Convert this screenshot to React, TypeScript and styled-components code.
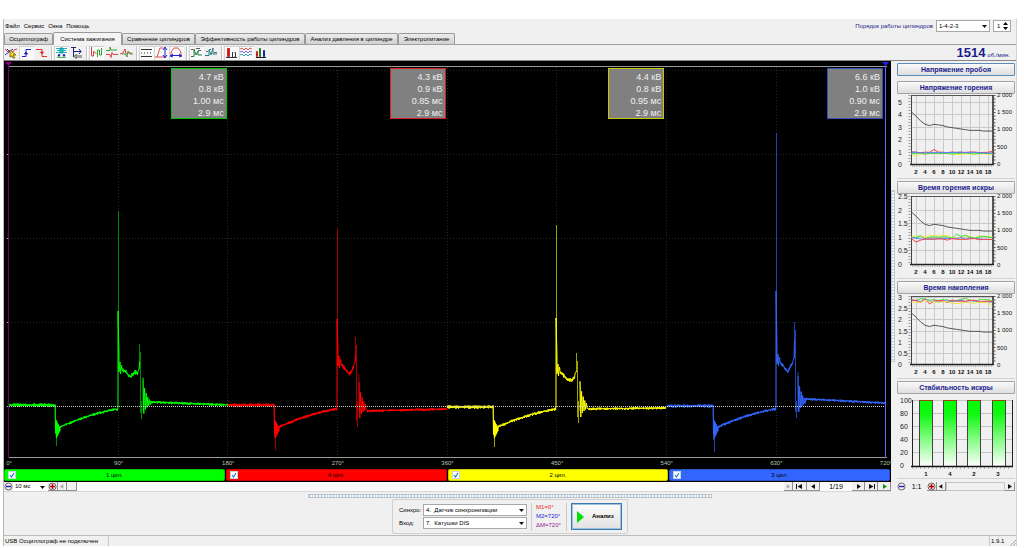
import React from "react";
import styled, { createGlobalStyle } from "styled-components";

const arial = `"Liberation Sans", Arial, sans-serif`;
const navy = "#1c1c8c";

const Global = createGlobalStyle`
  * { box-sizing: border-box; }
  body { margin: 0; background: #fff; font-family: ${arial}; font-size: 6px; line-height: 9px; color: #000; }
  button, input, select { font: inherit; color: inherit; margin: 0; padding: 0; border-radius: 0; }
  svg { display: block; }
`;

const Shell = styled.div`
  margin: 19px 7px 3px 3px;
  background: #f0f0f0;
  border-left: 1px solid #b8b8b8;
  border-right: 1px solid #d0d0d0;
`;

const MenuBar = styled.header`
  display: flex;
  align-items: center;
  justify-content: space-between;
  height: 14px;
  padding: 0 5px 0 1px;
`;
const Menu = styled.nav`
  display: flex;
  gap: 4px;
`;
const MenuItem = styled.button`
  border: 0;
  background: none;
`;
const OrderGroup = styled.div`
  display: flex;
  align-items: center;
  gap: 3px;
  color: ${navy};
`;

const SelectBox = styled.span<{ $w: number; $plain?: boolean }>`
  position: relative;
  display: block;
  width: ${(p) => p.$w}px;
  height: ${(p) => (p.$plain ? 9 : 12)}px;
  color: #000;
  svg {
    position: absolute;
    right: 3px;
    top: 50%;
    margin-top: -1px;
    pointer-events: none;
  }
  select {
    display: block;
    appearance: none;
    width: 100%;
    height: 100%;
    padding: 0 2px;
    background: #fff;
    border: ${(p) => (p.$plain ? "0" : "1px solid #a8a8a8")};
  }
`;
const Spinner = styled.span`
  display: flex;
  width: 18px;
  height: 12px;
  border: 1px solid #a8a8a8;
  background: #fff;
  color: #000;
  input {
    width: 9px;
    border: 0;
    padding-left: 3px;
    background: none;
  }
`;
const SpinButtons = styled.span`
  display: flex;
  flex-direction: column;
  justify-content: center;
  gap: 2px;
  button {
    display: block;
    border: 0;
    background: none;
  }
`;

const TabRow = styled.div`
  display: flex;
  align-items: flex-end;
  height: 12px;
  border-bottom: 1px solid #a0a0a0;
`;
const Tab = styled.button<{ $w: number; $active?: boolean }>`
  width: ${(p) => p.$w}px;
  height: ${(p) => (p.$active ? 13 : 11)}px;
  margin-bottom: ${(p) => (p.$active ? -1 : 0)}px;
  flex: none;
  display: flex;
  align-items: center;
  justify-content: center;
  white-space: nowrap;
  border: 1px solid #9a9a9a;
  border-bottom: 0;
  border-radius: 2px 2px 0 0;
  background: ${(p) => (p.$active ? "#f4f4f4" : "linear-gradient(#ececec, #d2d2d2)")};
`;

const ToolRow = styled.div`
  display: flex;
  align-items: center;
  height: 16px;
  padding-right: 6px;
  border-bottom: 1px solid #888;
`;
const ToolGroup = styled.div`
  display: flex;
  padding-right: 2px;
  margin-right: 2px;
  border-right: 1px solid #c4c4c4;
  box-shadow: 1px 0 #fff;
  &:nth-last-child(2) {
    border: 0;
    box-shadow: none;
  }
`;
const Tool = styled.button<{ $on?: boolean }>`
  width: 15px;
  height: 14px;
  border: 0;
  background: ${(p) => (p.$on ? "#fafafa" : "none")};
  box-shadow: ${(p) => (p.$on ? "inset 1px 1px #d4d4d4" : "none")};
`;
const Rpm = styled.div`
  display: flex;
  align-items: baseline;
  gap: 2px;
  margin-left: auto;
  color: ${navy};
  strong {
    font: bold 13px/14px ${arial};
  }
`;

const Main = styled.main`
  display: grid;
  grid-template-columns: minmax(0, 1fr) 125px;
`;
const Scope = styled.section`
  background: #000;
`;
const Screen = styled.div`
  position: relative;
`;
const Trace = styled.svg`
  width: 100%;
  height: 397px;
`;
const ReadoutLayer = styled.div`
  position: absolute;
  inset: 7px 8px auto 4px;
  display: grid;
  grid-template-columns: repeat(4, 1fr);
  justify-items: end;
`;
const Readout = styled.div<{ $c: string }>`
  width: 56px;
  height: 51px;
  padding: 2px 2px 0;
  border: 1px solid ${(p) => p.$c};
  background: #808080;
  color: #f0f0f0;
  font: 9px/12px ${arial};
  text-align: right;
`;
const Degrees = styled.div`
  display: flex;
  justify-content: space-between;
  height: 11px;
  padding: 0 5px 0 5px;
  color: #b4ccb0;
  line-height: 11px;
  span {
    display: flex;
    justify-content: center;
    width: 0;
  }
`;
const CylinderRow = styled.div`
  display: grid;
  grid-template-columns: repeat(4, 1fr);
  gap: 1px;
  height: 13px;
  padding: 0 1px 1px 0;
`;
const Cylinder = styled.label<{ $c: string }>`
  display: grid;
  grid-template-columns: 8px 1fr 8px;
  align-items: center;
  padding: 0 3px;
  border-radius: 2px;
  border: 1px solid rgba(0, 0, 0, 0.2);
  background: ${(p) => p.$c};
  text-align: center;
`;
const Tick = styled.span`
  position: relative;
  display: block;
  width: 8px;
  height: 8px;
  input {
    display: block;
    appearance: none;
    width: 8px;
    height: 8px;
    background: #fff;
    border: 1px solid #c8d4dc;
  }
  svg {
    position: absolute;
    inset: 0;
    pointer-events: none;
  }
`;
const ScopeBar = styled.div`
  display: flex;
  align-items: center;
  height: 10px;
  background: #fafafa;
  border-bottom: 1px solid #d8d8d8;
`;
const Spring = styled.span`
  flex: 1;
`;
const Small = styled.button<{ $w: number; $flat?: boolean }>`
  display: flex;
  align-items: center;
  justify-content: center;
  width: ${(p) => p.$w}px;
  height: 9px;
  border: 0 solid #909090;
  border-width: ${(p) => (p.$flat ? "0" : "0 1px 1px 0")};
  background: #f0f0f0;
`;
const Count = styled.output<{ $w: number }>`
  width: ${(p) => p.$w}px;
  font-size: 7px;
  text-align: center;
`;

const Side = styled.aside`
  display: grid;
  grid-template-columns: 4px minmax(0, 1fr);
  gap: 2px;
`;
const VSplit = styled.div`
  align-self: start;
  height: 172px;
  margin-top: 129px;
  border: 1px solid #c0c8d0;
  background: repeating-linear-gradient(#a8d0f4 0 1px, #f4f8fc 1px 3px);
`;
const SideStack = styled.div`
  display: flex;
  flex-direction: column;
  gap: 2px;
  padding: 2px 1px 0 0;
`;
const TitleButton = styled.button<{ $focus?: boolean }>`
  display: block;
  width: 100%;
  height: 13px;
  margin-bottom: ${(p) => (p.$focus ? 3 : 0)}px;
  border: 1px solid ${(p) => (p.$focus ? "#5a8cb8" : "#a4a4a4")};
  border-radius: 1px;
  background: linear-gradient(#fafafa, #dedede);
  color: ${navy};
  font: bold 7px/9px ${arial};
`;
const Card = styled.section`
  height: 98px;
  border-bottom: 1px solid #d4d4d4;
  svg {
    width: 100%;
    height: 84px;
    overflow: visible;
    font: 7px ${arial};
  }
`;
const SideBar = styled.div`
  display: flex;
  align-items: center;
  height: 11px;
`;
const Track = styled.span`
  flex: 1;
  height: 9px;
  border: 1px solid #c4c4c4;
`;

const HSplit = styled.div`
  width: 40%;
  height: 4px;
  margin: 2px auto 1px;
  border: 1px solid #c0c0c0;
  background: repeating-linear-gradient(90deg, #a8d0f4 0 1px, #f0f4f8 1px 3px);
`;
const ControlArea = styled.div`
  display: flex;
  justify-content: center;
  padding-bottom: 1px;
  border-bottom: 1px solid #bcbcbc;
`;
const Controls = styled.form`
  display: flex;
  align-items: center;
  gap: 4px;
  height: 35px;
  padding: 0 5px 0 6px;
  border: 1px solid #d0d0d0;
  border-radius: 2px;
`;
const Fields = styled.div`
  display: grid;
  grid-template-columns: 21px 104px;
  align-items: center;
  gap: 1px 3px;
`;
const Marks = styled.div`
  width: 36px;
  height: 28px;
  padding-left: 4px;
  border-left: 1px solid #ccc;
  border-right: 1px solid #ccc;
  line-height: 9px;
`;
const Mark = styled.div<{ $c: string }>`
  color: ${(p) => p.$c};
`;
const Analyse = styled.button`
  display: flex;
  align-items: center;
  gap: 8px;
  width: 51px;
  height: 27px;
  padding-left: 5px;
  border: 1px solid #3c78b0;
  box-shadow: inset 0 0 0 1px #9cc0e0;
  background: linear-gradient(#fcfcfc, #e2e2e2);
  font: bold 6px/9px ${arial};
`;
const Status = styled.footer`
  display: flex;
  height: 10px;
  line-height: 9px;
`;
const StatusCell = styled.span<{ $w?: number }>`
  width: ${(p) => (p.$w ? p.$w + "px" : "auto")};
  flex: ${(p) => (p.$w ? "none" : "1")};
  display: flex;
  justify-content: space-between;
  align-items: flex-end;
  padding-left: 1px;
  white-space: nowrap;
  border-right: 1px solid #c8c8c8;
  &:last-of-type {
    border: 0;
  }
`;

/* ---------- waveform ---------- */

type Wave = {
  x0: number; color: string; dim: string; base: number; dip: number; spike: number; body: number;
  burn: number[]; off: number; peak: number; under: number; tail: [number, number];
};

const waves: Wave[] = [
  { x0: 5, color: "#00ff00", dim: "#008a00", base: 344, dip: 385, spike: 150, body: 250, burn: [309, 311, 316, 311, 312], off: 131, peak: 283, under: 358, tail: [341, 344] },
  { x0: 224, color: "#ff0000", dim: "#a00000", base: 344, dip: 389, spike: 167, body: 258, burn: [303, 308, 313, 311, 305], off: 128, peak: 276, under: 366, tail: [350, 348] },
  { x0: 443, color: "#ffff00", dim: "#a0a000", base: 346, dip: 386, spike: 164, body: 257, burn: [311, 315, 319, 319, 315], off: 130, peak: 292, under: 362, tail: [348, 347] },
  { x0: 663, color: "#3366ff", dim: "#2244aa", base: 345, dip: 391, spike: 72, body: 230, burn: [301, 306, 311, 306, 301], off: 128, peak: 261, under: 357, tail: [338, 342] },
];

const noise = (n: number) => {
  const s = Math.sin(n * 12.9898) * 43758.5453;
  return s - Math.floor(s) - 0.5;
};

function band(x1: number, y1: number, x2: number, y2: number, amp: number, bend = 0) {
  const out: string[] = [];
  for (let x = x1; x <= x2; x += 0.5) {
    const t = (x - x1) / Math.max(1, x2 - x1);
    const y = y1 + (y2 - y1) * t - bend * 4 * t * (1 - t);
    const side = Math.round(x * 2) % 2 ? 1 : -1;
    out.push(`${x.toFixed(1)} ${(y + side * amp * (0.8 + noise(x))).toFixed(1)}`);
  }
  return out.join("L");
}

function bodyPath(w: Wave) {
  const a = w.x0;
  const sx = a + 109;
  const p = a + w.off;
  const b = w.burn;
  const charge = [0, 1, 2, 3, 4, 5].map((i) => {
    const k = 9 - i * 1.4;
    return `${a + 47 + i * 0.7} ${368 - k}L${a + 47.4 + i * 0.7} ${368 + k}`;
  });
  const mid = (w.tail[0] + 344) / 2;
  const ring = [20, 12, 8, 5, 3].map((k, i) => `${p + 3 + i * 1.6} ${mid - k * 1.3}L${p + 3.8 + i * 1.6} ${mid + k * 0.5}`);
  return [
    `M${band(a, w.base, a + 46, w.base, 1.3)}`,
    `L${a + 46.5} ${w.base + 28}L${charge.join("L")}`,
    `L${band(a + 51, 366, sx - 0.5, 348, 1.1, 2)}`,
    `L${sx} 346L${sx} ${w.body}L${sx + 1} ${b[0] - 16}L${sx + 1} ${b[0] + 2}L${sx + 2} ${b[0] - 8}L${sx + 2.5} ${b[0] + 4}L${sx + 3.5} ${b[0] - 5}`,
    `L${band(sx + 4, b[0], sx + 8, b[1], 1.6)}`,
    `L${band(sx + 8, b[1], sx + 12, b[2], 1.3)}`,
    `L${band(sx + 12, b[2], p - 5, b[3], 1.5)}`,
    `L${band(p - 5, b[3], p - 2, b[4], 1.8)}`,
    `L${p - 1} ${b[4] - 4}L${p - 0.5} ${w.peak + 18}`,
    `M${ring.join("L")}`,
    `L${band(p + 11, w.tail[0], a + 219, w.tail[1], 1)}`,
  ].join("");
}

function dimPath(w: Wave) {
  const a = w.x0;
  const p = a + w.off;
  return `M${a + 46.5} ${w.base}V${w.dip - 12}M${a + 47.5} 360V${w.dip}M${a + 109.5} ${w.spike}V${w.burn[0]}M${p - 0.5} ${w.burn[4] - 4}V${w.peak}M${p + 0.5} ${w.peak + 8}V${w.under - 6}M${p + 1.5} 340V${w.under}M${p + 3} ${w.burn[0] + 10}V350`;
}

const Waveform = () => (
  <Trace viewBox="0 0 887 397" preserveAspectRatio="none" fill="none" aria-label="Осциллограмма">
    <g stroke="#282828" strokeDasharray="1 2">
      {[9, 93, 177, 261].map((y) => <path key={y} d={`M5 ${y + 0.5}H882`} />)}
      {[114, 223, 333, 443, 552, 662, 772].map((x) => <path key={x} d={`M${x + 0.5} 6V396`} />)}
    </g>
    <path d="M4 5.5H883M4 396.5H883" stroke="#9a9a9a" />
    <path d="M3 93.5h2M3 177.5h2M3 261.5h2M3 345.5h2" stroke="#bbb" />
    {waves.map((w) => (
      <g key={w.color}>
        <path d={dimPath(w)} stroke={w.dim} />
        <path d={bodyPath(w)} stroke={w.color} strokeLinejoin="bevel" />
      </g>
    ))}
    <path d="M5 345.5H882" stroke="#d0d0d0" strokeDasharray="1 1" />
    <path d="M4.5 5V397" stroke="#700070" />
    <path d="M881.5 5V397" stroke="#6464ff" />
    <path d="M1 1h7L4.500 5Z" fill="#900090" />
    <path d="M878 1h7l-3.500 4Z" fill="#2020ff" />
  </Trace>
);

/* ---------- side charts ---------- */

type Line = { c: string; v: number[] };

const decay = [0, 6, 13, 18, 20, 18, 19, 20, 22, 23, 24, 25, 26, 27, 27, 27, 28, 28, 28];

function LineChart({ ticks, top, step, start, lines, yl }: { ticks: string[]; top: number; step: number; start: number; lines: Line[]; yl: number }) {
  const px = (i: number) => 14.5 + i * 4.5;
  const pts = (v: number[]) => v.map((y, i) => `${px(i)},${y}`).join(" ");
  return (
    <svg viewBox="0 0 118 84" fill="none">
      <g stroke="#cacaca">
        {ticks.map((t, i) => <path key={t} d={`M14 ${Math.round(top + i * step) + 0.5}H96`} />)}
        {[1, 3, 5, 7, 9, 11, 13, 15, 17].map((i) => <path key={i} d={`M${Math.round(px(i)) + 0.5} ${yl}V70`} />)}
      </g>
      <path d={`M14 ${yl + 0.5}H96`} stroke="#555" />
      <path d={`M14.5 ${yl}V70`} stroke="#444" />
      <path d={`M13 70.5H97M96 ${yl}V71`} stroke="#222" strokeWidth="1.500" />
      <path d={`M12.500 ${yl}V70`} stroke="#999" strokeDasharray="1 2" strokeWidth="2" />
      <path d={`M97.500 ${yl}V70`} stroke="#555" strokeDasharray="1 2.400" strokeWidth="2" />
      <path d="M15 72H96" stroke="#777" strokeDasharray="1 1.250" strokeWidth="1" />
      <polyline points={pts(decay.map((d) => d * 0.68 + start))} stroke="#555" />
      {lines.map((l) => <polyline key={l.c} points={pts(l.v)} stroke={l.c} />)}
      <g fill="#222">
        {ticks.map((t, i) => <text key={t} x="1" y={Math.round(top + i * step) + 3}>{t}</text>)}
      </g>
      <g fill="#111" fontSize="6">
        {["2 000", "1 500", "1 000", "500", "0"].map((t, i) => <text key={t} x={100} y={Math.round(yl + i * 17.2) + 2}>{t}</text>)}
      </g>
      <g fill="#111" fontWeight="bold" textAnchor="middle" fontSize="6">
        {[2, 4, 6, 8, 10, 12, 14, 16, 18].map((n) => <text key={n} x={Math.round(px(n - 1))} y="80">{n}</text>)}
      </g>
    </svg>
  );
}

const wobble = (base: number, amp: number, seed: number, patch: Record<number, number> = {}) =>
  decay.map((_, i) => (patch[i] !== undefined ? patch[i] : base + noise(i * 3.1 + seed) * amp));

function StabilityChart() {
  return (
    <svg viewBox="0 0 118 84" fill="none">
      <defs>
        <linearGradient id="fade" x1="0" y1="0" x2="0" y2="1">
          <stop offset="0" stopColor="#00ff00" />
          <stop offset="0.200" stopColor="#10f810" />
          <stop offset="1" stopColor="#fff" />
        </linearGradient>
      </defs>
      <g stroke="#c4c4c4">{[6, 19, 32, 45, 58].map((y) => <path key={y} d={`M15 ${y + 0.5}H115`} />)}</g>
      {[22, 46, 70, 95].map((x) => (
        <g key={x}>
          <rect x={x + 0.5} y="6.500" width="13" height="66" fill="url(#fade)" stroke="#444" />
          <path d={`M${x} 6.500h14`} stroke="#a04000" />
        </g>
      ))}
      <path d="M15.500 6V72M115.500 6V72" stroke="#222" />
      <path d="M14 72.500H116" stroke="#111" strokeWidth="1.500" />
      <path d="M15 74H115" stroke="#777" strokeDasharray="1 3" />
      <g fill="#222">
        {[100, 80, 60, 40, 20, 0].map((n, i) => <text key={n} x="3" y={9 + i * 13}>{n}</text>)}
      </g>
      <g fill="#111" textAnchor="middle" fontWeight="bold" fontSize="6">
        {["1", "4", "2", "3"].map((n, i) => <text key={n} x={29 + i * 24} y="82">{n}</text>)}
      </g>
    </svg>
  );
}

/* ---------- icons ---------- */

const Caret = () => <svg width="5" height="3" viewBox="0 0 5 3"><path d="M0 0h5L2.500 3Z" fill="#111" /></svg>;
const Zoom = ({ plus }: { plus?: boolean }) => (
  <svg width="9" height="9" viewBox="0 0 9 9" fill="none">
    <circle cx="4.500" cy="4.500" r="3.500" stroke="#666" fill="#f4f4f4" />
    <path d={plus ? "M2 4.500h5M4.500 2v5" : "M2 4.500h5"} stroke={plus ? "#c00000" : "#2020c0"} strokeWidth="1.500" />
  </svg>
);
const Arrow = ({ d, c = "#111" }: { d: string; c?: string }) => (
  <svg width="9" height="7" viewBox="0 0 9 7"><path d={d} fill={c} /></svg>
);
const Grip = () => (
  <svg width="7" height="7" fill="none"><path d="M1 7L7 1M4 7l3-3" stroke="#aaa" /></svg>
);
const LEFT = "M6 1v5L2 3.500Z";
const RIGHT = "M3 1v5l4-2.500Z";
const FIRST = "M1 1h1v5H1ZM7 1v5L2.500 3.500Z";
const LAST = "M7 1h1v5H7ZM2 1v5l4.500-2.500Z";

type Shape = [string, string, string?];
const toolGroups: { label: string; on?: boolean; s: Shape[] }[][] = [
  [
    { label: "Настройка", s: [["M1 3l3 3 3-2", "#e03030"], ["M8 7l2-3 3-1", "#e03030"], ["M3 3l4 4M1 9l4-3 4-3", "#3030d0"], ["M6 4l6 5-3 0 2 3-2 0-1-2-2 1Z", "#807010", "#f0d820"]] },
    { label: "Фронт", on: true, s: [["M3 10.500h4V3.500h5", "#2020d0"], ["M5.500 8l1.500-2 1.500 2Z", "#2020d0", "#2020d0"]] },
    { label: "Спад", s: [["M2 3.500h6v7h5", "#e03030"], ["M6.500 6l1.500 2 1.500-2Z", "#e03030", "#e03030"]] },
  ],
  [
    { label: "Цилиндры", on: true, s: [["M2 2.500h11M3 4.500h9M2 6.500h11", "#20b8b8"], ["M6 2h3v5H6Z", "#00a0a8", "#20c0c0"], ["M5 8l-1 2h2ZM10 8l-1 2h2Z", "#2020c0", "#2020c0"], ["M3 11.500h9", "#40c040"]] },
    { label: "Углы", s: [["M4.500 1v10M2 1.500h5M4 5.500h8M10 3l2 2.500-2 2.500", "#202080"], ["M6 9h2v3H6ZM10 9v3M12 9v3", "#555"]] },
  ],
  [
    { label: "Сигналы", on: true, s: [["M2.500 1v9h2V5l3 3", "#e04040"], ["M8.500 11V4h2v5h2V2", "#30a030"]] },
    { label: "Наложение", s: [["M2 4.500h4V1l1 3h6", "#30a030"], ["M2 8.500h4l1 3 1-5 1 2h5", "#e04040"]] },
    { label: "Сдвиг", s: [["M1 8l3-1 2-4 1 5 2-1h4", "#e04040"], ["M3 8h3l2 3 1-6 2 3h3", "#40a040"]] },
  ],
  [
    { label: "Линии", on: true, s: [["M2 3.500h11M2 10.500h11", "#333"], ["M2 7h1M5 7h1M8 7h1M11 7h1", "#333"]] },
    { label: "Размах", on: true, s: [["M1 11h2l3-9h3M3 11h9", "#e05050"], ["M11 2v9M9 4l2-3 2 3M9 9l2 3 2-3", "#2020d0"]] },
    { label: "Период", on: true, s: [["M2 9V6l3-4h4l3 4v3", "#e05050"], ["M2 9.500h10M4 8l-3 2 3 1M10 8l3 2-3 1", "#2020d0"]] },
  ],
  [
    { label: "Параметры", on: true, s: [["M2 10.500h3V3l2 6 2-4v4h4", "#208040"], ["M2 3.500h2M7 2.500h4M9 4.500h3", "#555"]] },
    { label: "Значения", s: [["M1 9.500h4V4l2 5 2-7v6h4", "#208080"], ["M2 5.500h2M10 6.500h3M5 3.500h2", "#667"]] },
  ],
  [
    { label: "Гистограмма", on: true, s: [["M3.500 2.500h2v8h-2Z", "#d02020", "#d02020"], ["M8.500 6v5M10.500 6.500h1v4h-1M2 11.500h11", "#333"]] },
    { label: "Графики", on: true, s: [["M1 3l2-1 2 2 2-2 2 2 2-2 2 1", "#e05050"], ["M1 6l2-1 2 2 2-2 2 2 2-2 2 1", "#8060e0"], ["M1 9l2-1 2 2 2-2 2 2 2-2 2 1", "#30a0b0"]] },
    { label: "Столбцы", s: [["M2.500 5.500h1v5h-1Z", "#d02020", "#d02020"], ["M5.500 2.500h1v8h-1Z", "#208020", "#208020"], ["M9.500 4.500h1v6h-1Z", "#2020a0", "#2020a0"], ["M2 11.500h10", "#111"]] },
  ],
];

const tabs: [string, number][] = [
  ["Осциллограф", 49], ["Система зажигания", 69], ["Сравнение цилиндров", 73],
  ["Эффективность работы цилиндров", 110], ["Анализ давления в цилиндре", 93], ["Электропитание", 57],
];

const readouts: [string, string[]][] = [
  ["#00c800", ["4.7 кВ", "0.8 кВ", "1.00 мс", "2.9 мс"]],
  ["#d02020", ["4.3 кВ", "0.9 кВ", "0.85 мс", "2.9 мс"]],
  ["#c8c800", ["4.4 кВ", "0.8 кВ", "0.95 мс", "2.9 мс"]],
  ["#3050c0", ["6.6 кВ", "1.0 кВ", "0.90 мс", "2.9 мс"]],
];

const cylinders: [string, string][] = [["1 цил.", "#00ff00"], ["4 цил.", "#ff0000"], ["2 цил.", "#ffff00"], ["3 цил.", "#3366ff"]];

export default function App() {
  return (
    <>
      <Global />
      <Shell>
        <MenuBar>
          <Menu>
            {["Файл", "Сервис", "Окна", "Помощь"].map((m) => <MenuItem key={m}>{m}</MenuItem>)}
          </Menu>
          <OrderGroup>
            <label htmlFor="order">Порядок работы цилиндров</label>
            <SelectBox $w={54}>
              <select id="order"><option>1-4-2-3</option></select>
              <Caret />
            </SelectBox>
            <Spinner>
              <input aria-label="Номер" defaultValue="1" />
              <SpinButtons>
                <button aria-label="Больше"><svg width="5" height="3"><path d="M0 3h5L2.500 0Z" /></svg></button>
                <button aria-label="Меньше"><svg width="5" height="3"><path d="M0 0h5L2.500 3Z" /></svg></button>
              </SpinButtons>
            </Spinner>
          </OrderGroup>
        </MenuBar>
        <TabRow role="tablist">
          {tabs.map(([t, w], i) => <Tab key={t} role="tab" $w={w} $active={i === 1}>{t}</Tab>)}
        </TabRow>
        <ToolRow>
          {toolGroups.map((g, i) => (
            <ToolGroup key={i}>
              {g.map((t) => (
                <Tool key={t.label} aria-label={t.label} $on={t.on}>
                  <svg width="15" height="14" viewBox="0 0 15 14">
                    {t.s.map(([d, c, f], k) => <path key={k} d={d} stroke={c} fill={f || "none"} />)}
                  </svg>
                </Tool>
              ))}
            </ToolGroup>
          ))}
          <Rpm><strong>1514</strong>об./мин.</Rpm>
        </ToolRow>

        <Main>
          <Scope>
            <Screen>
              <Waveform />
              <ReadoutLayer>
                {readouts.map(([c, rows]) => (
                  <Readout key={c} $c={c}>{rows.map((r) => <div key={r}>{r}</div>)}</Readout>
                ))}
              </ReadoutLayer>
            </Screen>
            <Degrees>
              {[0, 90, 180, 270, 360, 450, 540, 630, 720].map((d) => <span key={d}>{d}°</span>)}
            </Degrees>
            <CylinderRow>
              {cylinders.map(([t, c]) => (
                <Cylinder key={t} $c={c}>
                  <Tick>
                    <input type="checkbox" defaultChecked />
                    <svg width="8" height="8" fill="none"><path d="M2 4l1.500 2L6 2" stroke="#2080d0" strokeWidth="1.200" /></svg>
                  </Tick>
                  {t}
                </Cylinder>
              ))}
            </CylinderRow>
            <ScopeBar>
              <Small $w={9} $flat aria-label="Уменьшить"><Zoom /></Small>
              <SelectBox $w={35} $plain>
                <select aria-label="Развёртка"><option>10 мс</option></select>
                <Caret />
              </SelectBox>
              <Small $w={10} aria-label="Увеличить"><Zoom plus /></Small>
              <Small $w={9} aria-label="Влево"><Arrow d={LEFT} c="#aaa" /></Small>
              <Small $w={10} aria-label="Прокрутка" />
              <Spring />
              <Small $w={9} aria-label="Вправо"><Arrow d={RIGHT} c="#aaa" /></Small>
              <Small $w={14} aria-label="Первый"><Arrow d={FIRST} /></Small>
              <Small $w={13} aria-label="Предыдущий"><Arrow d={LEFT} /></Small>
              <Count $w={32}>1/19</Count>
              <Small $w={13} aria-label="Следующий"><Arrow d={RIGHT} /></Small>
              <Small $w={13} aria-label="Последний"><Arrow d={LAST} /></Small>
              <Small $w={13} aria-label="Пуск"><Arrow d={RIGHT} c="#109010" /></Small>
            </ScopeBar>
          </Scope>

          <Side>
            <VSplit />
            <SideStack>
              <TitleButton $focus>Напряжение пробоя</TitleButton>
              <Card>
                <TitleButton>Напряжение горения</TitleButton>
                <LineChart
                  ticks={["5", "4", "3", "2", "1", "0"]} top={8} step={12.4} start={18} yl={1}
                  lines={[
                    { c: "#f0f040", v: wobble(60, 1, 5, { 1: 63 }) },
                    { c: "#40e040", v: wobble(59.5, 1.5, 9) },
                    { c: "#ff4040", v: wobble(58.5, 1.2, 2, { 5: 55.5, 18: 57 }) },
                    { c: "#5080ff", v: wobble(58.500, 1.2, 7) },
                  ]}
                />
              </Card>
              <Card>
                <TitleButton>Время горения искры</TitleButton>
                <LineChart
                  ticks={["2.5", "2", "1.5", "1", "0.5", "0"]} top={2} step={13.6} start={18} yl={2}
                  lines={[
                    { c: "#f0f040", v: wobble(42.5, 3, 5) },
                    { c: "#40e040", v: wobble(43, 4, 9, { 10: 40 }) },
                    { c: "#5080ff", v: wobble(44.5, 2, 7) },
                    { c: "#ff4040", v: wobble(45.500, 2, 2, { 1: 48 }) },
                  ]}
                />
              </Card>
              <Card>
                <TitleButton>Время накопления</TitleButton>
                <LineChart
                  ticks={["3", "2.5", "2", "1.5", "1", "0.5", "0"]} top={3} step={11.2} start={19} yl={2}
                  lines={[
                    { c: "#40e040", v: wobble(6, 4, 9, { 3: 5 }) },
                    { c: "#5080ff", v: wobble(7, 2, 7, { 3: 5, 0: 6 }) },
                    { c: "#ff4040", v: wobble(7.500, 3, 2, { 3: 5, 0: 6, 4: 10 }) },
                    { c: "#f0e040", v: wobble(8.500, 2, 5, { 3: 6, 18: 12 }) },
                  ]}
                />
              </Card>
              <Card>
                <TitleButton>Стабильность искры</TitleButton>
                <StabilityChart />
              </Card>
              <SideBar>
                <Small $w={9} $flat aria-label="Уменьшить"><Zoom /></Small>
                <Count $w={21}>1:1</Count>
                <Small $w={10} aria-label="Увеличить"><Zoom plus /></Small>
                <Small $w={9} aria-label="Влево"><Arrow d={LEFT} /></Small>
                <Track />
                <Small $w={10} aria-label="Вправо"><Arrow d={RIGHT} /></Small>
              </SideBar>
            </SideStack>
          </Side>
        </Main>

        <HSplit />
        <ControlArea>
          <Controls>
            <Fields>
              <label htmlFor="sync">Синхро:</label>
              <SelectBox $w={104}>
                <select id="sync"><option>4.&nbsp; Датчик синхронизации</option></select>
                <Caret />
              </SelectBox>
              <label htmlFor="input">Вход:</label>
              <SelectBox $w={104}>
                <select id="input"><option>7.&nbsp; Катушки DIS</option></select>
                <Caret />
              </SelectBox>
            </Fields>
            <Marks>
              <Mark $c="#f02020">M1=0°</Mark>
              <Mark $c="#2020e0">M2=720°</Mark>
              <Mark $c="#902090">ΔM=720°</Mark>
            </Marks>
            <Analyse type="button">
              <svg width="7" height="12"><path d="M0 0v12l7-6Z" fill="#00e000" /></svg>
              Анализ
            </Analyse>
          </Controls>
        </ControlArea>
        <Status>
          <StatusCell $w={105}>USB Осциллограф не подключен</StatusCell>
          <StatusCell />
          <StatusCell $w={26}>1.9.1<Grip /></StatusCell>
        </Status>
      </Shell>
    </>
  );
}
